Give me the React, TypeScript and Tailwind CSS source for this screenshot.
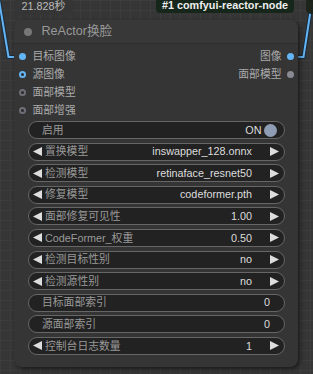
import React from "react";

const FONT = "font-['Liberation_Sans','Noto_Sans_CJK_SC',sans-serif]";

function LeftArrow() {
  return (
    <svg width="9" height="9" viewBox="0 0 9 9" className="shrink-0">
      <polygon points="9,0 9,9 0,4.5" fill="#dddddd" />
    </svg>
  );
}
function RightArrow() {
  return (
    <svg width="9" height="9" viewBox="0 0 9 9" className="shrink-0">
      <polygon points="0,0 0,9 9,4.5" fill="#dddddd" />
    </svg>
  );
}

function Combo({ label, value, arrows = true }: { label: string; value: string; arrows?: boolean }) {
  return (
    <div className="flex h-[18px] items-center rounded-full border border-[#666] bg-[#222] text-[10.8px] leading-none">
      {arrows ? (
        <>
          <span className="ml-[4.5px] flex"><LeftArrow /></span>
          <span className="ml-[3px] whitespace-nowrap text-[#999]">{label}</span>
          <span className="ml-auto whitespace-nowrap text-[#ddd]">{value}</span>
          <span className="ml-[18px] mr-[4.5px] flex"><RightArrow /></span>
        </>
      ) : (
        <>
          <span className="ml-[13.5px] whitespace-nowrap text-[#999]">{label}</span>
          <span className="ml-auto mr-[13.5px] whitespace-nowrap text-[#ddd]">{value}</span>
        </>
      )}
    </div>
  );
}

function Toggle({ label }: { label: string }) {
  return (
    <div className="flex h-[18px] items-center rounded-full border border-[#666] bg-[#222] text-[10.8px] leading-none">
      <span className="ml-[13.5px] text-[#999]">{label}</span>
      <span className="ml-auto text-[#ddd]">ON</span>
      <span className="ml-[2.5px] mr-[6.5px] h-[13px] w-[13px] rounded-full bg-[#8f9db4]" />
    </div>
  );
}

function InSlot({ label, kind }: { label: string; kind: "blue" | "blueHollow" | "grayHollow" }) {
  const dot =
    kind === "blue" ? (
      <span className="h-[7px] w-[7px] rounded-full bg-[#64b5f6]" />
    ) : kind === "blueHollow" ? (
      <span className="h-[7px] w-[7px] rounded-full border-[2px] border-[#64b5f6] bg-[#2a2a2a]" />
    ) : (
      <span className="h-[7px] w-[7px] rounded-full border-[2px] border-[#6f6f78] bg-[#2a2a2a]" />
    );
  return (
    <div className="flex h-[18px] items-center">
      <span className="ml-[4.5px] flex">{dot}</span>
      <span className="ml-[7px] text-[10.8px] leading-none text-[#aaa]">{label}</span>
    </div>
  );
}

export default function App() {
  return (
    <div
      className={`relative h-[374px] w-[313px] overflow-hidden bg-[#363636] bg-[linear-gradient(#3d3d3d_1px,transparent_1px),linear-gradient(90deg,#3d3d3d_1px,transparent_1px)] bg-[size:10px_10px] ${FONT}`}
    >
      {/* links */}
      <svg className="absolute left-0 top-0" width="313" height="374">
        <path d="M22 57 L8.5 57 L-1 0" fill="none" stroke="#1a2a3a" strokeWidth="4" />
        <path d="M22 57 L8.5 57 L-1 0" fill="none" stroke="#64b5f6" strokeWidth="2" />
        <path d="M290 57 L303.5 57 L313 -5" fill="none" stroke="#1a2a3a" strokeWidth="4" />
        <path d="M290 57 L303.5 57 L313 -5" fill="none" stroke="#64b5f6" strokeWidth="2" />
      </svg>

      {/* other node corner top-right */}
      <div className="absolute left-[306px] top-[-6px] h-[20px] w-[20px] rounded-[5px] bg-[#1c241c]" />

      {/* time badge */}
      <div className="absolute left-[14px] top-[-4px] flex h-[19px] w-[59px] items-end justify-center rounded-[4px] bg-[#353535] pb-[3px] text-[10.8px] leading-none text-[#bbb]">
        21.828秒
      </div>

      {/* node id badge */}
      <div className="absolute left-[156px] top-[-4px] flex h-[17px] w-[138px] items-end justify-center rounded-[4px] bg-[#16261a] pb-[2px] text-[10.8px] font-bold leading-none text-[#eee]">
        #1 comfyui-reactor-node
      </div>

      {/* node */}
      <div className="absolute left-[14px] top-[20px] flex h-[347px] w-[284px] flex-col rounded-[8px] bg-[#353535] shadow-[2px_2px_5px_rgba(0,0,0,0.55)]">
        <div className="flex h-[24px] items-center rounded-t-[8px] border-b border-[#2e2e2e] bg-[#383838]">
          <span className="ml-[9.5px] h-[8px] w-[8px] rounded-full bg-[#777]" />
          <span className="ml-[10px] text-[12.6px] leading-none text-[#999]">ReActor换脸</span>
        </div>

        <div className="relative pt-[3px]">
          <InSlot label="目标图像" kind="blue" />
          <InSlot label="源图像" kind="blueHollow" />
          <InSlot label="面部模型" kind="grayHollow" />
          <InSlot label="面部增强" kind="grayHollow" />

          <div className="absolute right-0 top-[3px] flex flex-col items-end">
            <div className="flex h-[18px] items-center">
              <span className="text-[10.8px] leading-none text-[#aaa]">图像</span>
              <span className="ml-[5px] mr-[4.5px] h-[7px] w-[7px] rounded-full bg-[#64b5f6]" />
            </div>
            <div className="flex h-[18px] items-center">
              <span className="text-[10.8px] leading-none text-[#aaa]">面部模型</span>
              <span className="ml-[5px] mr-[4.5px] h-[7px] w-[7px] rounded-full bg-[#8a8a94]" />
            </div>
          </div>
        </div>

        <div className="mt-[2px] flex flex-col gap-[3.6px] px-[13.5px]">
          <Toggle label="启用" />
          <Combo label="置换模型" value="inswapper_128.onnx" />
          <Combo label="检测模型" value="retinaface_resnet50" />
          <Combo label="修复模型" value="codeformer.pth" />
          <Combo label="面部修复可见性" value="1.00" />
          <Combo label="CodeFormer_权重" value="0.50" />
          <Combo label="检测目标性别" value="no" />
          <Combo label="检测源性别" value="no" />
          <Combo label="目标面部索引" value="0" arrows={false} />
          <Combo label="源面部索引" value="0" arrows={false} />
          <Combo label="控制台日志数量" value="1" />
        </div>
      </div>
    </div>
  );
}
